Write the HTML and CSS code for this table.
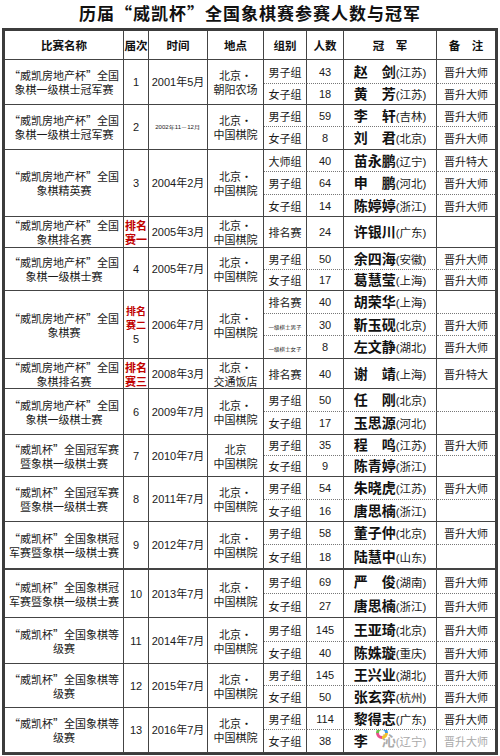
FILE: index.html
```html
<!DOCTYPE html>
<html lang="zh-CN">
<head>
<meta charset="utf-8">
<title>历届威凯杯</title>
<link rel="stylesheet" href="styles.css">
</head>
<body>
<div class="page">
<h1 class="title">历届“威凯杯”全国象棋赛参赛人数与冠军</h1>
<table class="t">
<thead>
<tr class="h29"><th class="c1">比赛名称</th><th class="c2">届次</th><th class="c3">时间</th><th class="c4">地点</th><th class="c5">组别</th><th class="c6">人数</th><th class="c7">冠　军</th><th class="c8">备　注</th></tr>
</thead>
<tbody>
<tr class="h24 dash"><td rowspan="2" class="name">“威凯房地产杯”全国<br>象棋一级棋士冠军赛</td><td rowspan="2" class="num">1</td><td rowspan="2" class="time">2001年5月</td><td rowspan="2" class="loc">北京•<br>朝阳农场</td><td class="grp">男子组</td><td class="cnt">43</td><td class="champ"><b>赵　剑</b><span class="prov">(江苏)</span></td><td class="note">晋升大师</td></tr>
<tr class="h21"><td class="grp">女子组</td><td class="cnt">18</td><td class="champ"><b>黄　芳</b><span class="prov">(江苏)</span></td><td class="note">晋升大师</td></tr>

<tr class="h22 dash"><td rowspan="2" class="name">“威凯房地产杯”全国<br>象棋一级棋士冠军赛</td><td rowspan="2" class="num">2</td><td rowspan="2" class="time"><span class="tiny">2002年11－12月</span></td><td rowspan="2" class="loc">北京•<br>中国棋院</td><td class="grp">男子组</td><td class="cnt">59</td><td class="champ"><b>李　轩</b><span class="prov">(吉林)</span></td><td class="note">晋升大师</td></tr>
<tr class="h23"><td class="grp">女子组</td><td class="cnt">8</td><td class="champ"><b>刘　君</b><span class="prov">(北京)</span></td><td class="note">晋升大师</td></tr>

<tr class="h22 dash"><td rowspan="3" class="name">“威凯房地产杯”全国<br>象棋精英赛</td><td rowspan="3" class="num">3</td><td rowspan="3" class="time">2004年2月</td><td rowspan="3" class="loc">北京•<br>中国棋院</td><td class="grp">大师组</td><td class="cnt">40</td><td class="champ"><b>苗永鹏</b><span class="prov">(辽宁)</span></td><td class="note">晋升特大</td></tr>
<tr class="h23 dash"><td class="grp">男子组</td><td class="cnt">64</td><td class="champ"><b>申　鹏</b><span class="prov">(河北)</span></td><td class="note">晋升大师</td></tr>
<tr class="h22"><td class="grp">女子组</td><td class="cnt">14</td><td class="champ"><b>陈婷婷</b><span class="prov">(浙江)</span></td><td class="note">晋升大师</td></tr>

<tr class="h31"><td class="name">“威凯房地产杯”全国<br>象棋排名赛</td><td class="num red">排名<br>赛一</td><td class="time">2005年3月</td><td class="loc">北京•<br>中国棋院</td><td class="grp">排名赛</td><td class="cnt">24</td><td class="champ"><b>许银川</b><span class="prov">(广东)</span></td><td class="note"></td></tr>

<tr class="h22 dash"><td rowspan="2" class="name">“威凯房地产杯”全国<br>象棋一级棋士赛</td><td rowspan="2" class="num">4</td><td rowspan="2" class="time">2005年7月</td><td rowspan="2" class="loc">北京•<br>中国棋院</td><td class="grp">男子组</td><td class="cnt">50</td><td class="champ"><b>余四海</b><span class="prov">(安徽)</span></td><td class="note">晋升大师</td></tr>
<tr class="h21"><td class="grp">女子组</td><td class="cnt">17</td><td class="champ"><b>葛慧莹</b><span class="prov">(上海)</span></td><td class="note">晋升大师</td></tr>

<tr class="h23 dash"><td rowspan="3" class="name">“威凯房地产杯”全国<br>象棋赛</td><td rowspan="3" class="num"><span class="red">排名<br>赛二</span><br>5</td><td rowspan="3" class="time">2006年7月</td><td rowspan="3" class="loc">北京•<br>中国棋院</td><td class="grp">排名赛</td><td class="cnt">40</td><td class="champ"><b>胡荣华</b><span class="prov">(上海)</span></td><td class="note"></td></tr>
<tr class="h22 dash"><td class="grp"><span class="mini">一级棋士男子</span></td><td class="cnt">30</td><td class="champ"><b>靳玉砚</b><span class="prov">(北京)</span></td><td class="note">晋升大师</td></tr>
<tr class="h23"><td class="grp"><span class="mini">一级棋士女子</span></td><td class="cnt">8</td><td class="champ"><b>左文静</b><span class="prov">(湖北)</span></td><td class="note">晋升大师</td></tr>

<tr class="h30"><td class="name">“威凯房地产杯”全国<br>象棋排名赛</td><td class="num red">排名<br>赛三</td><td class="time">2008年3月</td><td class="loc">北京•<br>交通饭店</td><td class="grp">排名赛</td><td class="cnt">40</td><td class="champ"><b>谢　靖</b><span class="prov">(上海)</span></td><td class="note">晋升特大</td></tr>

<tr class="h23 dash"><td rowspan="2" class="name">“威凯房地产杯”全国<br>象棋一级棋士赛</td><td rowspan="2" class="num">6</td><td rowspan="2" class="time">2009年7月</td><td rowspan="2" class="loc">北京•<br>中国棋院</td><td class="grp">男子组</td><td class="cnt">50</td><td class="champ"><b>任　刚</b><span class="prov">(北京)</span></td><td class="note"></td></tr>
<tr class="h23"><td class="grp">女子组</td><td class="cnt">17</td><td class="champ"><b>玉思源</b><span class="prov">(河北)</span></td><td class="note"></td></tr>

<tr class="h21 dash"><td rowspan="2" class="name">“威凯杯”全国冠军赛<br>暨象棋一级棋士赛</td><td rowspan="2" class="num">7</td><td rowspan="2" class="time">2010年7月</td><td rowspan="2" class="loc">北京<br>中国棋院</td><td class="grp">男子组</td><td class="cnt">35</td><td class="champ"><b>程　鸣</b><span class="prov">(江苏)</span></td><td class="note">晋升大师</td></tr>
<tr class="h21"><td class="grp">女子组</td><td class="cnt">9</td><td class="champ"><b>陈青婷</b><span class="prov">(浙江)</span></td><td class="note"></td></tr>

<tr class="h23 dash"><td rowspan="2" class="name">“威凯杯”全国冠军赛<br>暨象棋一级棋士赛</td><td rowspan="2" class="num">8</td><td rowspan="2" class="time">2011年7月</td><td rowspan="2" class="loc">北京•<br>中国棋院</td><td class="grp">男子组</td><td class="cnt">54</td><td class="champ"><b>朱晓虎</b><span class="prov">(江苏)</span></td><td class="note">晋升大师</td></tr>
<tr class="h22"><td class="grp">女子组</td><td class="cnt">16</td><td class="champ"><b>唐思楠</b><span class="prov">(浙江)</span></td><td class="note"></td></tr>

<tr class="h23 dash"><td rowspan="2" class="name">“威凯杯”全国象棋冠<br>军赛暨象棋一级棋士赛</td><td rowspan="2" class="num">9</td><td rowspan="2" class="time">2012年7月</td><td rowspan="2" class="loc">北京•<br>中国棋院</td><td class="grp">男子组</td><td class="cnt">58</td><td class="champ"><b>董子仲</b><span class="prov">(北京)</span></td><td class="note">晋升大师</td></tr>
<tr class="h24"><td class="grp">女子组</td><td class="cnt">18</td><td class="champ"><b>陆慧中</b><span class="prov">(山东)</span></td><td class="note"></td></tr>

<tr class="h25 dash thick"><td rowspan="2" class="name">“威凯杯”全国象棋冠<br>军赛暨象棋一级棋士赛</td><td rowspan="2" class="num">10</td><td rowspan="2" class="time">2013年7月</td><td rowspan="2" class="loc">北京•<br>中国棋院</td><td class="grp">男子组</td><td class="cnt">69</td><td class="champ"><b>严　俊</b><span class="prov">(湖南)</span></td><td class="note">晋升大师</td></tr>
<tr class="h24"><td class="grp">女子组</td><td class="cnt">27</td><td class="champ"><b>唐思楠</b><span class="prov">(浙江)</span></td><td class="note">晋升大师</td></tr>

<tr class="h24 dash"><td rowspan="2" class="name">“威凯杯”全国象棋等<br>级赛</td><td rowspan="2" class="num">11</td><td rowspan="2" class="time">2014年7月</td><td rowspan="2" class="loc">北京•<br>中国棋院</td><td class="grp">男子组</td><td class="cnt">145</td><td class="champ"><b>王亚琦</b><span class="prov">(北京)</span></td><td class="note">晋升大师</td></tr>
<tr class="h22"><td class="grp">女子组</td><td class="cnt">40</td><td class="champ"><b>陈姝璇</b><span class="prov">(重庆)</span></td><td class="note">晋升大师</td></tr>

<tr class="h22 dash"><td rowspan="2" class="name">“威凯杯”全国象棋等<br>级赛</td><td rowspan="2" class="num">12</td><td rowspan="2" class="time">2015年7月</td><td rowspan="2" class="loc">北京•<br>中国棋院</td><td class="grp">男子组</td><td class="cnt">145</td><td class="champ"><b>王兴业</b><span class="prov">(湖北)</span></td><td class="note">晋升大师</td></tr>
<tr class="h22"><td class="grp">女子组</td><td class="cnt">50</td><td class="champ"><b>张玄弈</b><span class="prov">(杭州)</span></td><td class="note">晋升大师</td></tr>

<tr class="h22 dash"><td rowspan="2" class="name">“威凯杯”全国象棋等<br>级赛</td><td rowspan="2" class="num">13</td><td rowspan="2" class="time">2016年7月</td><td rowspan="2" class="loc">北京•<br>中国棋院</td><td class="grp">男子组</td><td class="cnt">114</td><td class="champ"><b>黎得志</b><span class="prov">(广东)</span></td><td class="note">晋升大师</td></tr>
<tr class="h23"><td class="grp">女子组</td><td class="cnt">38</td><td class="champ wm"><b>李　<span class="faded">沁</span></b><span class="prov faded">(辽宁)</span>
<svg class="logo" width="14" height="14" viewBox="0 0 14 14" aria-hidden="true">
<path d="M7 1 A6 6 0 0 1 13 7 L10 7 A3 3 0 0 0 7 4 Z" fill="#3d9be9"/>
<path d="M13 7 A6 6 0 0 1 7 13 L7 10 A3 3 0 0 0 10 7 Z" fill="#f2c12e"/>
<path d="M7 13 A6 6 0 0 1 1 7 L4 7 A3 3 0 0 0 7 10 Z" fill="#e8508c"/>
<path d="M1 7 A6 6 0 0 1 7 1 L7 4 A3 3 0 0 0 4 7 Z" fill="#6cc24a"/>
</svg></td><td class="note faded">晋升大师</td></tr>
</tbody>
</table>
</div>
</body>
</html>
```
FILE: styles.css
```css
* { box-sizing: border-box; }
html, body { margin: 0; padding: 0; background: #fff; }
body {
  font-family: "Noto Sans CJK SC", sans-serif;
  color: #1a1a1a;
}
.page { width: 500px; padding-left: 2px; }
.title {
  margin: 0;
  width: 496px;
  height: 28px;
  line-height: 25px;
  font-size: 17px;
  font-weight: 700;
  text-align: center;
  letter-spacing: 1px;
  color: #111;
}
.t {
  border-collapse: separate;
  border-spacing: 0;
  table-layout: fixed;
  width: 496px;
  border: 3px solid #3c3c3c;
  border-bottom-width: 2px;
}
.t th, .t td {
  border-right: 1px solid #444;
  border-bottom: 1px solid #444;
  padding: 0;
  text-align: center;
  vertical-align: middle;
  font-size: 11px;
  line-height: 14px;
  white-space: nowrap;
  overflow: hidden;
}
.t tr > :last-child { border-right: none; }
.t th { font-size: 11.5px; font-weight: 700; color: #111; }
.c1 { width: 119px; }
.c2 { width: 25px; }
.c3 { width: 59px; }
.c4 { width: 56px; }
.c5 { width: 43px; }
.c6 { width: 37px; }
.c7 { width: 93px; }
.c8 { width: 58px; }

.dash > td:not([rowspan]) { border-bottom: 1px dotted #777; }
.thick > td { border-top: 1px solid #444; }

.h21 { height: 21px; }
.h22 { height: 22px; }
.h23 { height: 23px; }
.h24 { height: 24px; }
.h25 { height: 25px; }
.h29 { height: 29px; }
.h30 { height: 30px; }
.h31 { height: 31px; }

.name { font-size: 10.5px; line-height: 14px; }
.num { font-family: "Liberation Sans", "Noto Sans CJK SC", sans-serif; font-size: 11px; }
.time { font-family: "Liberation Sans", "Noto Sans CJK SC", sans-serif; font-size: 11px; }
.loc { font-size: 11px; line-height: 14px; }
.cnt { font-family: "Liberation Sans", sans-serif; font-size: 10px; }
.red { color: #c00000; font-weight: 700; font-family: "Noto Sans CJK SC", sans-serif; font-size: 10px; line-height: 13.5px; }
.champ { text-align: left; padding-left: 9px; position: relative; overflow: visible; }
.champ b { font-size: 14px; font-weight: 700; color: #111; }
.prov { font-size: 11.5px; font-family: "Liberation Sans", "Noto Sans CJK SC", sans-serif; }
.note { font-size: 10.5px; }
.tiny { display: inline-block; font-size: 4.5px; line-height: 6px; transform: scaleX(1.35); vertical-align: middle; }
.mini { display: inline-block; font-size: 5px; line-height: 6px; transform: scaleX(1.1); vertical-align: middle; }
.faded { color: #aaa; }
.logo { position: absolute; left: 31px; top: -4px; }
```
